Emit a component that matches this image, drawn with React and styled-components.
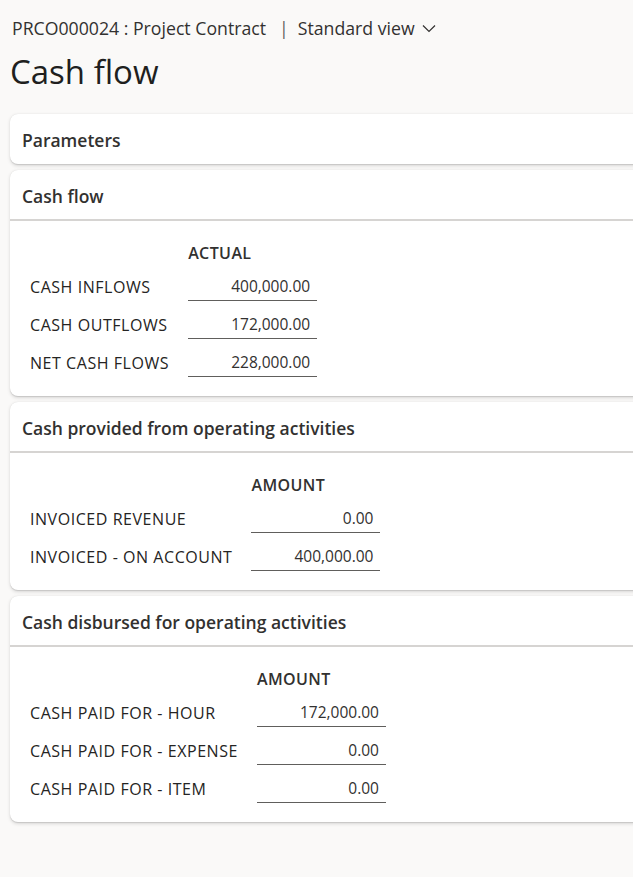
import React from "react";
import styled, { createGlobalStyle } from "styled-components";

const Global = createGlobalStyle`
  html, body { margin: 0; padding: 0; overflow: hidden; }
  body {
    background: #faf9f8;
    font-family: "Open Sans", "Noto Sans", sans-serif;
    color: #323130;
  }
`;

const Page = styled.div`
  padding: 16px 0 20px 10px;
  width: 640px;
`;

const Breadcrumb = styled.div`
  display: flex;
  align-items: center;
  height: 24px;
  padding-left: 2px;
  font-size: 17.7px;
  color: #323130;
  white-space: nowrap;
`;

const Sep = styled.span`
  margin: 0 9px 0 13px;
  color: #605e5c;
`;

const ViewPicker = styled.span`
  display: inline-flex;
  align-items: center;
  gap: 7px;
`;

const Title = styled.h1`
  margin: 10px 0 0;
  font-size: 33px;
  font-weight: 400;
  color: #201f1e;
  line-height: 44px;
`;

const Cards = styled.div`
  display: flex;
  flex-direction: column;
  gap: 6px;
  margin-top: 20px;
`;

const Card = styled.section`
  background: #ffffff;
  border-radius: 8px 0 0 8px;
  box-shadow: 0 1.6px 3.6px rgba(0, 0, 0, 0.13), 0 0.3px 0.9px rgba(0, 0, 0, 0.11);
`;

const CardHeader = styled.div`
  height: ${(p) => (p.$divider ? "51px" : "50px")};
  box-sizing: border-box;
  padding-top: 2px;
  display: flex;
  align-items: center;
  padding-left: 12px;
  font-size: 17.5px;
  font-weight: 600;
  color: #323130;
  white-space: nowrap;
  border-bottom: ${(p) => (p.$divider ? "2px solid #d6d4d2" : "none")};
`;

const CardBody = styled.div`
  padding: 21px 0 18px 20px;
`;

const Grid = styled.div`
  display: grid;
  grid-template-columns: max-content 129px;
  column-gap: 19px;
  row-gap: 8px;
  grid-template-rows: 22px;
  grid-auto-rows: 30px;
  align-items: center;
`;

const ColHead = styled.div`
  grid-column: 2;
  font-size: 16px;
  font-weight: 600;
  color: #323130;
  line-height: 22px;
  letter-spacing: 0.4px;
`;

const Label = styled.div`
  grid-column: 1;
  font-size: 16px;
  font-weight: 500;
  color: #252423;
  line-height: 28px;
  letter-spacing: 0.55px;
  white-space: nowrap;
`;

const Value = styled.div`
  grid-column: 2;
  height: 29px;
  line-height: 28px;
  text-align: right;
  padding-right: 7px;
  font-size: 15.5px;
  color: #323130;
  border-bottom: 1.5px solid #605e5c;
  box-sizing: border-box;
  align-self: start;
`;

const Chevron = () => (
  <svg width="14" height="9" viewBox="0 0 14 9" fill="none">
    <path d="M1 1.5 L7 7.5 L13 1.5" stroke="#323130" strokeWidth="1.2" />
  </svg>
);

const sections = [
  {
    title: "Cash flow",
    col: "ACTUAL",
    rows: [
      ["CASH INFLOWS", "400,000.00"],
      ["CASH OUTFLOWS", "172,000.00"],
      ["NET CASH FLOWS", "228,000.00"],
    ],
  },
  {
    title: "Cash provided from operating activities",
    col: "AMOUNT",
    rows: [
      ["INVOICED REVENUE", "0.00"],
      ["INVOICED - ON ACCOUNT", "400,000.00"],
    ],
  },
  {
    title: "Cash disbursed for operating activities",
    col: "AMOUNT",
    rows: [
      ["CASH PAID FOR - HOUR", "172,000.00"],
      ["CASH PAID FOR - EXPENSE", "0.00"],
      ["CASH PAID FOR - ITEM", "0.00"],
    ],
  },
];

export default function App() {
  return (
    <>
      <Global />
      <Page>
        <Breadcrumb>
          <span>PRCO000024 : Project Contract</span>
          <Sep>|</Sep>
          <ViewPicker>
            Standard view <Chevron />
          </ViewPicker>
        </Breadcrumb>
        <Title>Cash flow</Title>
        <Cards>
          <Card>
            <CardHeader>Parameters</CardHeader>
          </Card>
          {sections.map((s) => (
            <Card key={s.title}>
              <CardHeader $divider>{s.title}</CardHeader>
              <CardBody>
                <Grid>
                  <ColHead>{s.col}</ColHead>
                  {s.rows.map(([l, v]) => (
                    <React.Fragment key={l}>
                      <Label>{l}</Label>
                      <Value>{v}</Value>
                    </React.Fragment>
                  ))}
                </Grid>
              </CardBody>
            </Card>
          ))}
        </Cards>
      </Page>
    </>
  );
}
